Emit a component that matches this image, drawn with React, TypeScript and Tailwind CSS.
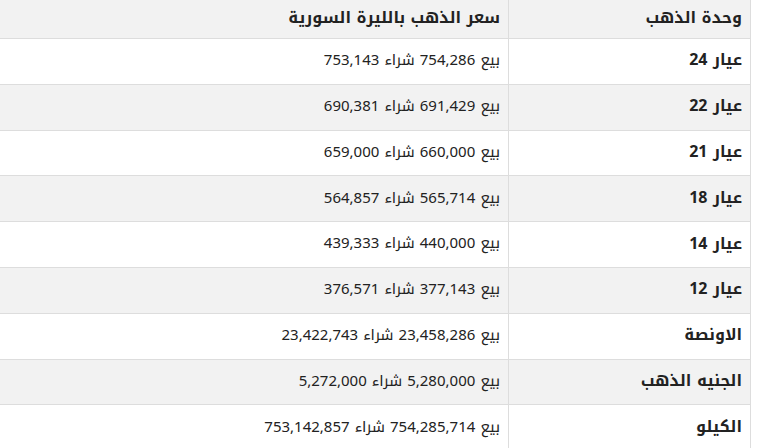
const rows = [
  { unit: "عيار 24", price: "بيع 754,286 شراء 753,143" },
  { unit: "عيار 22", price: "بيع 691,429 شراء 690,381" },
  { unit: "عيار 21", price: "بيع 660,000 شراء 659,000" },
  { unit: "عيار 18", price: "بيع 565,714 شراء 564,857" },
  { unit: "عيار 14", price: "بيع 440,000 شراء 439,333" },
  { unit: "عيار 12", price: "بيع 377,143 شراء 376,571" },
  { unit: "الاونصة", price: "بيع 23,458,286 شراء 23,422,743" },
  { unit: "الجنيه الذهب", price: "بيع 5,280,000 شراء 5,272,000" },
  { unit: "الكيلو", price: "بيع 754,285,714 شراء 753,142,857" },
];

export default function App() {
  return (
    <div className="w-[764px] h-[448px] overflow-hidden bg-white">
      <div
        dir="rtl"
        className="w-[751px] border-r border-[#dddddd] text-[15px] text-[#222222]"
        style={{ fontFamily: '"Noto Kufi Arabic", "Open Sans", "Noto Sans Arabic", sans-serif' }}
      >
        {/* رأس الجدول */}
        <div className="grid grid-cols-[242px_508px] h-[39px] bg-[#f2f2f2] border-b border-[#dddddd] font-bold text-[16px]">
          <div className="flex items-center pr-2 pb-0.5 border-l border-[#dddddd]">وحدة الذهب</div>
          <div className="flex items-center pr-2 pb-0.5">سعر الذهب بالليرة السورية</div>
        </div>

        {rows.map((r, i) => (
          <div
            key={r.unit}
            className={`grid grid-cols-[242px_508px] h-[45.8px] border-b border-[#dddddd] ${
              i % 2 === 1 ? "bg-[#f2f2f2]" : "bg-white"
            }`}
          >
            <div className="flex items-center pr-2 pb-0.5 border-l border-[#dddddd] font-bold text-[16px]">{r.unit}</div>
            <div className="flex items-center pr-2 pb-0.5">{r.price}</div>
          </div>
        ))}
      </div>
    </div>
  );
}
